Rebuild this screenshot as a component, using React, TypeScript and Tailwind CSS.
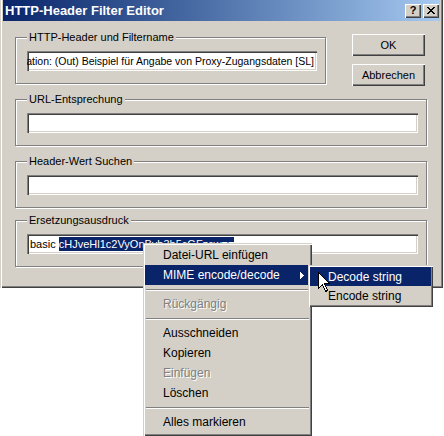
import React from "react";

const raised =
  "shadow-[inset_1px_1px_0_#D4D0C8,inset_2px_2px_0_#ffffff,inset_-1px_-1px_0_#404040,inset_-2px_-2px_0_#808080]";
const button =
  "shadow-[inset_1px_1px_0_#ffffff,inset_-1px_-1px_0_#404040,inset_-2px_-2px_0_#808080]";
const sunken =
  "shadow-[inset_1px_1px_0_#808080,inset_2px_2px_0_#404040,inset_-1px_-1px_0_#ffffff,inset_-2px_-2px_0_#D4D0C8]";

function Group({
  label,
  width,
  children,
}: {
  label: string;
  width: string;
  children: React.ReactNode;
}) {
  return (
    <div
      className={`relative ${width} h-[47px] border border-[#808080] shadow-[inset_1px_1px_0_#ffffff,1px_1px_0_#ffffff] pt-[13px] pl-[11px] pr-[8px]`}
    >
      <div className="absolute left-[11px] top-[-7px] px-[2px] bg-[#D4D0C8] leading-[13px] whitespace-nowrap">
        {label}
      </div>
      {children}
    </div>
  );
}

function Field({
  children,
  end,
  size = "text-[11px]",
}: {
  children?: React.ReactNode;
  end?: boolean;
  size?: string;
}) {
  return (
    <div
      className={`h-[20px] w-full bg-white ${sunken} flex items-center overflow-hidden whitespace-nowrap pl-[3px] pr-[3px] leading-[14px] ${size} ${
        end ? "justify-end" : ""
      }`}
    >
      {children}
    </div>
  );
}

function XGlyph() {
  const rows = [
    "xx....xx",
    ".xx..xx.",
    "..xxxx..",
    "...xx...",
    "..xxxx..",
    ".xx..xx.",
    "xx....xx",
  ];
  return (
    <svg width="8" height="7" viewBox="0 0 8 7" shapeRendering="crispEdges">
      {rows.map((r, y) =>
        r.split("").map((c, x) =>
          c === "x" ? <rect key={`${x}-${y}`} x={x} y={y} width="1" height="1" fill="#000" /> : null
        )
      )}
    </svg>
  );
}

type Item =
  | { sep: true }
  | { sep?: false; label: string; disabled?: boolean; active?: boolean; sub?: boolean };

const menuItems: Item[] = [
  { label: "Datei-URL einfügen" },
  { label: "MIME encode/decode", active: true, sub: true },
  { sep: true },
  { label: "Rückgängig", disabled: true },
  { sep: true },
  { label: "Ausschneiden" },
  { label: "Kopieren" },
  { label: "Einfügen", disabled: true },
  { label: "Löschen" },
  { sep: true },
  { label: "Alles markieren" },
];

function MenuRow({ item, h }: { item: Item; h: string }) {
  if (item.sep) {
    return (
      <div className="h-[9px] flex items-center px-[1px]">
        <div className="w-full h-[2px] border-t border-[#808080] border-b border-b-white" />
      </div>
    );
  }
  return (
    <div
      className={`${h} flex items-center justify-between pl-[18px] pr-[6px] whitespace-nowrap text-[12px] ${
        item.active
          ? "bg-[#0A246A] text-white"
          : item.disabled
          ? "text-[#808080] [text-shadow:1px_1px_0_#ffffff]"
          : "text-black"
      }`}
    >
      <span>{item.label}</span>
      {item.sub && (
        <svg width="4" height="7" viewBox="0 0 4 7" shapeRendering="crispEdges">
          <path d="M0 0 L4 3.5 L0 7 Z" fill={item.active ? "#fff" : "#000"} />
        </svg>
      )}
    </div>
  );
}

export default function App() {
  return (
    <div className="relative w-[444px] h-[436px] bg-white overflow-hidden font-['Liberation_Sans',Arial,sans-serif] text-[11px] text-black">
      {/* Dialog window */}
      <div className="w-[443px] h-[288px] bg-[#D4D0C8] flex flex-col shadow-[inset_1px_0_0_#D4D0C8,inset_2px_0_0_#ffffff,inset_-1px_-1px_0_#404040,inset_-2px_-2px_0_#808080]">
        {/* Title bar */}
        <div className="mx-[3px] h-[21px] bg-linear-to-r from-[#0A246A] to-[#A6CAF0] flex items-center justify-between pl-[2px] pr-[1px]">
          <span className="text-white font-bold text-[13px] leading-[16px] whitespace-nowrap">
            HTTP-Header Filter Editor
          </span>
          <div className="flex gap-[2px]">
            <div
              className={`w-[16px] h-[14px] bg-[#D4D0C8] ${button} flex items-center justify-center font-bold text-[11px] leading-[11px] pb-[1px]`}
            >
              ?
            </div>
            <div
              className={`w-[16px] h-[14px] bg-[#D4D0C8] ${button} flex items-center justify-center pb-[1px] pr-[1px]`}
            >
              <XGlyph />
            </div>
          </div>
        </div>

        {/* Body */}
        <div className="flex flex-col pl-[15px]">
          <div className="flex items-start mt-[13px]">
            <div className="mt-[3px]">
              <Group label="HTTP-Header und Filtername" width="w-[311px]">
                <Field end size="text-[10.5px]">
                  <span>Proxy-Authorization: (Out) Beispiel für Angabe von Proxy-Zugangsdaten [SL]</span>
                </Field>
              </Group>
            </div>
            <div className="ml-[26px] flex flex-col gap-[8px]">
              <div className={`w-[73px] h-[22px] ${button} flex items-center justify-center`}>OK</div>
              <div className={`w-[73px] h-[22px] ${button} flex items-center justify-center`}>
                Abbrechen
              </div>
            </div>
          </div>

          <div className="mt-[13px]">
            <Group label="URL-Entsprechung" width="w-[412px]">
              <Field />
            </Group>
          </div>
          <div className="mt-[15px]">
            <Group label="Header-Wert Suchen" width="w-[412px]">
              <Field />
            </Group>
          </div>
          <div className="mt-[12px]">
            <Group label="Ersetzungsausdruck" width="w-[412px]">
              <Field>
                <span>basic&nbsp;</span>
                <span className="bg-[#0A246A] text-white">cHJveHl1c2VyOnByb3h5cGFzcw==</span>
              </Field>
            </Group>
          </div>
        </div>
      </div>

      {/* Context menu */}
      <div
        className={`absolute left-[143px] top-[243px] w-[169px] bg-[#D4D0C8] ${raised} pt-[2px] pb-[4px] px-[2px] flex flex-col`}
      >
        {menuItems.map((it, i) => (
          <MenuRow key={i} item={it} h="h-[20px]" />
        ))}
      </div>

      {/* Submenu */}
      <div
        className={`absolute left-[308px] top-[265px] w-[125px] bg-[#D4D0C8] ${raised} p-[2px] flex flex-col`}
      >
        <MenuRow item={{ label: "Decode string", active: true }} h="h-[19px]" />
        <MenuRow item={{ label: "Encode string" }} h="h-[19px]" />
      </div>

      {/* Mouse cursor */}
      <svg
        className="absolute left-[318px] top-[272px]"
        width="13"
        height="21"
        viewBox="0 0 13 21"
        shapeRendering="crispEdges"
      >
        <path
          d="M0.5 0.5 L0.5 16.5 L4.5 12.5 L7.5 19.5 L9.5 18.5 L6.5 11.5 L11.5 11.5 Z"
          fill="#ffffff"
          stroke="#000000"
          strokeWidth="1"
          strokeLinejoin="miter"
        />
      </svg>
    </div>
  );
}
